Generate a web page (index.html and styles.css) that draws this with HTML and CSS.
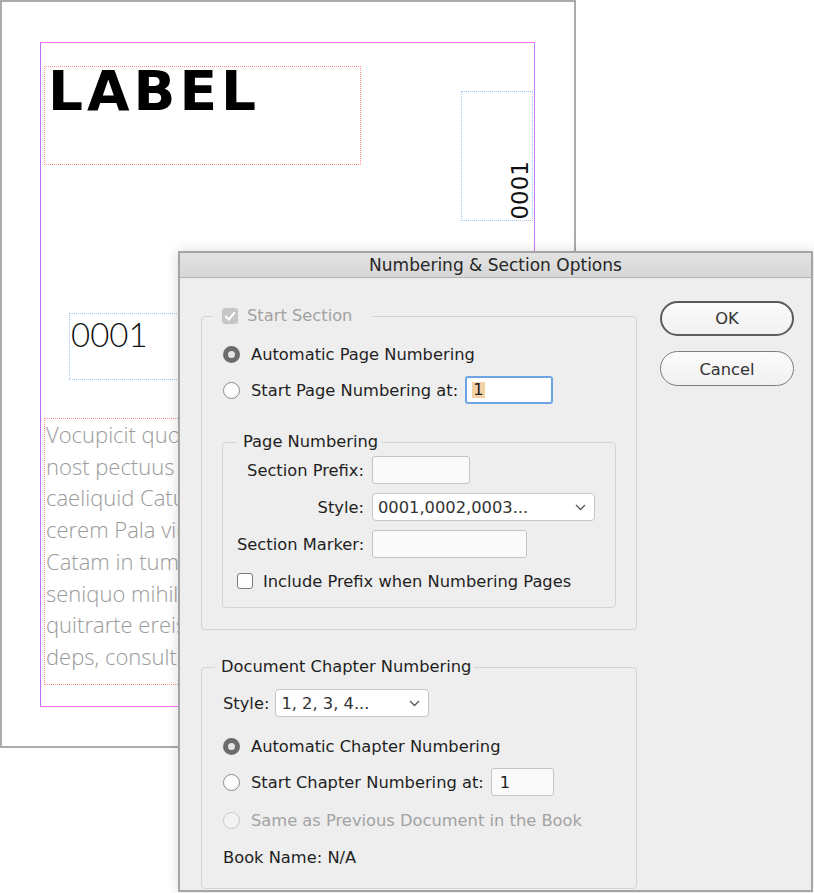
FILE: index.html
```html
<!DOCTYPE html>
<html lang="en">
<head>
    <meta charset="UTF-8">
    <title>Numbering &amp; Section Options</title>
    <link rel="stylesheet" href="styles.css">
</head>
<body>

<div class="page">
    <div class="margin-guide"></div>
    <div class="frame frame-label"><span class="label-text">LABEL</span></div>
    <div class="frame frame-folio-v"><span class="folio-v">0001</span></div>
    <div class="frame frame-folio"><span class="folio">0001</span></div>
    <div class="frame frame-body">
        <p class="body-text">Vocupicit quodius<br>nost pectuus ta<br>caeliquid Catus<br>cerem Pala vius<br>Catam in tumet<br>seniquo mihil<br>quitrarte ereis<br>deps, consultum</p>
    </div>
</div>

<div class="dialog">
    <div class="titlebar">Numbering &amp; Section Options</div>
    <div class="dialog-body">
        <div class="main-col">
            <fieldset class="group group-section">
                <legend><span class="check checked disabled"></span><span class="muted">Start Section</span></legend>
                <div class="row"><span class="radio on"></span>Automatic Page Numbering</div>
                <div class="row row-start"><span class="radio"></span>Start Page Numbering at:<span class="field field-focus field-start"><span class="sel">1</span></span></div>

                <fieldset class="group group-page">
                    <legend>Page Numbering</legend>
                    <div class="form-grid">
                        <span class="form-label">Section Prefix:</span>
                        <span class="field field-prefix"></span>
                        <span class="form-label">Style:</span>
                        <span class="select select-page">0001,0002,0003...<svg class="chev" width="11" height="7" viewBox="0 0 11 7"><polyline points="1,1 5.5,5.5 10,1" fill="none" stroke="#555" stroke-width="1.3"/></svg></span>
                        <span class="form-label">Section Marker:</span>
                        <span class="field field-marker"></span>
                    </div>
                    <div class="row row-check"><span class="check"></span>Include Prefix when Numbering Pages</div>
                </fieldset>
            </fieldset>

            <fieldset class="group group-chapter">
                <legend>Document Chapter Numbering</legend>
                <div class="row"><span class="style-label">Style:</span><span class="select select-chapter">1, 2, 3, 4...<svg class="chev" width="11" height="7" viewBox="0 0 11 7"><polyline points="1,1 5.5,5.5 10,1" fill="none" stroke="#555" stroke-width="1.3"/></svg></span></div>
                <div class="row row-auto-ch"><span class="radio on"></span>Automatic Chapter Numbering</div>
                <div class="row row-start-ch"><span class="radio"></span>Start Chapter Numbering at:<span class="field field-chapter">1</span></div>
                <div class="row row-same muted"><span class="radio disabled"></span>Same as Previous Document in the Book</div>
                <div class="row row-book">Book Name: N/A</div>
            </fieldset>
        </div>

        <div class="buttons">
            <button class="btn btn-default">OK</button>
            <button class="btn">Cancel</button>
        </div>
    </div>
</div>

</body>
</html>
```

FILE: styles.css
```css
body {
    margin: 0;
    width: 814px;
    height: 893px;
    overflow: hidden;
    position: relative;
    background-color: #fff;
}

/* document page behind the dialog */
.page {
    position: relative;
    width: 576px;
    height: 748px;
    box-sizing: border-box;
    border: 2px solid #a9abae;
    background-color: #fff;
}
.margin-guide {
    position: absolute;
    left: 38px;
    top: 40px;
    width: 495px;
    height: 665px;
    box-sizing: border-box;
    border-top: 1px solid #ff70ff;
    border-bottom: 1px solid #ff70ff;
    border-left: 1px solid #b870ff;
    border-right: 1px solid #c87cff;
}
.frame {
    position: absolute;
    box-sizing: border-box;
    border: 1px dotted #ff8c8c;
}
.frame-label {
    left: 42px;
    top: 64px;
    width: 317px;
    height: 99px;
    padding-left: 3px;
}
.label-text {
    display: block;
    margin-top: -4px;
    font-family: "DejaVu Sans", sans-serif;
    font-weight: 700;
    font-size: 55px;
    line-height: 56px;
    letter-spacing: 4px;
    color: #000;
}
.frame-folio-v {
    left: 459px;
    top: 89px;
    width: 72px;
    height: 130px;
    border-color: #9ec4f2;
    display: flex;
    justify-content: flex-end;
    align-items: flex-end;
}
.folio-v {
    display: block;
    writing-mode: vertical-rl;
    transform: rotate(180deg);
    font-family: "DejaVu Sans", sans-serif;
    font-size: 23px;
    line-height: 23px;
    color: #111;
}
.frame-folio {
    left: 67px;
    top: 311px;
    width: 220px;
    height: 67px;
    border-color: #9ec4f2;
    padding-left: 1px;
}
.folio {
    display: block;
    font-family: Lato, sans-serif;
    font-weight: 300;
    font-size: 33px;
    line-height: 40px;
    color: #111;
}
.frame-body {
    left: 42px;
    top: 416px;
    width: 300px;
    height: 267px;
    padding-left: 1px;
}
.body-text {
    margin: 0;
    white-space: nowrap;
    font-family: "Open Sans", sans-serif;
    font-weight: 300;
    font-size: 22px;
    line-height: 31.7px;
    color: #9a9a9a;
}

/* dialog */
.dialog {
    position: absolute;
    left: 178px;
    top: 251px;
    width: 635px;
    height: 641px;
    box-sizing: border-box;
    border: 2px solid #a5a5a5;
    background-color: #eeeeee;
    box-shadow: 0 0 12px rgba(0, 0, 0, 0.15);
    font-family: "DejaVu Sans", sans-serif;
    font-size: 16.3px;
    color: #1f1f1f;
}
.titlebar {
    height: 24px;
    line-height: 24px;
    text-align: center;
    background: linear-gradient(#e2e2e2, #d6d6d6);
    border-bottom: 1px solid #b3b3b3;
    color: #262626;
    font-size: 17px;
}
.dialog-body {
    display: flex;
    padding-left: 21px;
}
.main-col {
    width: 436px;
}
.group {
    margin: 0;
    padding: 0 20px;
    min-width: 0;
    border: 1px solid #d3d3d3;
    border-radius: 4px;
}
.group legend {
    height: 22px;
    line-height: 22px;
    display: flex;
    align-items: center;
}
.group-section {
    margin-top: 27px;
    padding-top: 13px;
    padding-bottom: 21px;
}
.group-section > legend {
    margin-left: -9px;
    padding: 0 20px 0 9px;
}
.group-page {
    margin-top: 27px;
    padding: 3px 20px 12px 14px;
}
.group-page > legend {
    padding: 0 4px 0 6px;
}
.group-chapter {
    margin-top: 26px;
    padding-top: 11px;
    padding-bottom: 17px;
}
.group-chapter > legend {
    margin-left: -7px;
    padding: 0 3px 0 6px;
}
.muted {
    color: #a2a2a2;
}

.row {
    height: 28px;
    display: flex;
    align-items: center;
    white-space: nowrap;
}
.row-start {
    margin-top: 8px;
}
.row-check {
    margin-top: 9px;
}
.row-auto-ch {
    margin-top: 15px;
}
.row-start-ch {
    margin-top: 8px;
}
.row-same {
    margin-top: 10px;
}
.row-book {
    margin-top: 9px;
    padding-left: 1px;
}

.radio {
    width: 17px;
    height: 17px;
    margin: 0 11px 0 1px;
    box-sizing: border-box;
    border: 1px solid #8a8a8a;
    border-radius: 50%;
    background-color: #fdfdfd;
    flex-shrink: 0;
}
.radio.on {
    border: 5px solid #6c6c6c;
    background-color: #e4e4e4;
}
.radio.disabled {
    border-color: #c9c9c9;
    background-color: #f3f3f3;
}
.check {
    width: 16px;
    height: 16px;
    margin-right: 10px;
    box-sizing: border-box;
    border: 1px solid #7a7a7a;
    border-radius: 3px;
    background-color: #fdfdfd;
    flex-shrink: 0;
}
.check.checked {
    margin-right: 9px;
    border: none;
    background-color: #c6c6c6;
    position: relative;
}
.check.checked::after {
    content: "";
    position: absolute;
    left: 5px;
    top: 2px;
    width: 4px;
    height: 8px;
    border-right: 2px solid #fff;
    border-bottom: 2px solid #fff;
    transform: rotate(40deg);
}

.field {
    display: inline-flex;
    align-items: center;
    height: 28px;
    box-sizing: border-box;
    border: 1px solid #c4c4c4;
    border-radius: 3px;
    background-color: #fafafa;
    padding-left: 6px;
}
.field-focus {
    border: 2px solid #6ea4e6;
    background-color: #fff;
    padding-left: 5px;
}
.field-start {
    width: 88px;
    height: 28px;
    margin-left: 7px;
}
.sel {
    background-color: #f4d2a6;
    padding: 0 1px;
    line-height: 16px;
}
.field-prefix {
    width: 98px;
}
.field-marker {
    width: 155px;
}
.field-chapter {
    width: 63px;
    margin-left: 7px;
    padding-left: 8px;
}

.form-grid {
    display: grid;
    grid-template-columns: 127px auto;
    column-gap: 8px;
    row-gap: 9px;
    align-items: center;
}
.form-label {
    text-align: right;
    white-space: nowrap;
}
.form-grid .field,
.form-grid .select {
    justify-self: start;
}

.select {
    display: inline-flex;
    align-items: center;
    justify-content: space-between;
    height: 28px;
    box-sizing: border-box;
    border: 1px solid #c6c6c6;
    border-radius: 4px;
    background-color: #fff;
    padding: 0 8px 0 5px;
    color: #333;
    white-space: nowrap;
}
.select-page {
    width: 223px;
}
.select-chapter {
    width: 154px;
}
.style-label {
    margin-right: 6px;
    padding-left: 1px;
}

.buttons {
    margin-left: 23px;
    margin-top: 23px;
    display: flex;
    flex-direction: column;
}
.btn {
    width: 134px;
    height: 35px;
    box-sizing: border-box;
    border: 1px solid #7c7c7c;
    border-radius: 18px;
    background: linear-gradient(#fbfbfb, #f1f1f1);
    font-family: "DejaVu Sans", sans-serif;
    font-size: 16.3px;
    color: #333;
    padding: 0;
    line-height: 35px;
}
.btn + .btn {
    margin-top: 15px;
}
.btn-default {
    border: 2px solid #5b5b5b;
    line-height: 31px;
}
```
